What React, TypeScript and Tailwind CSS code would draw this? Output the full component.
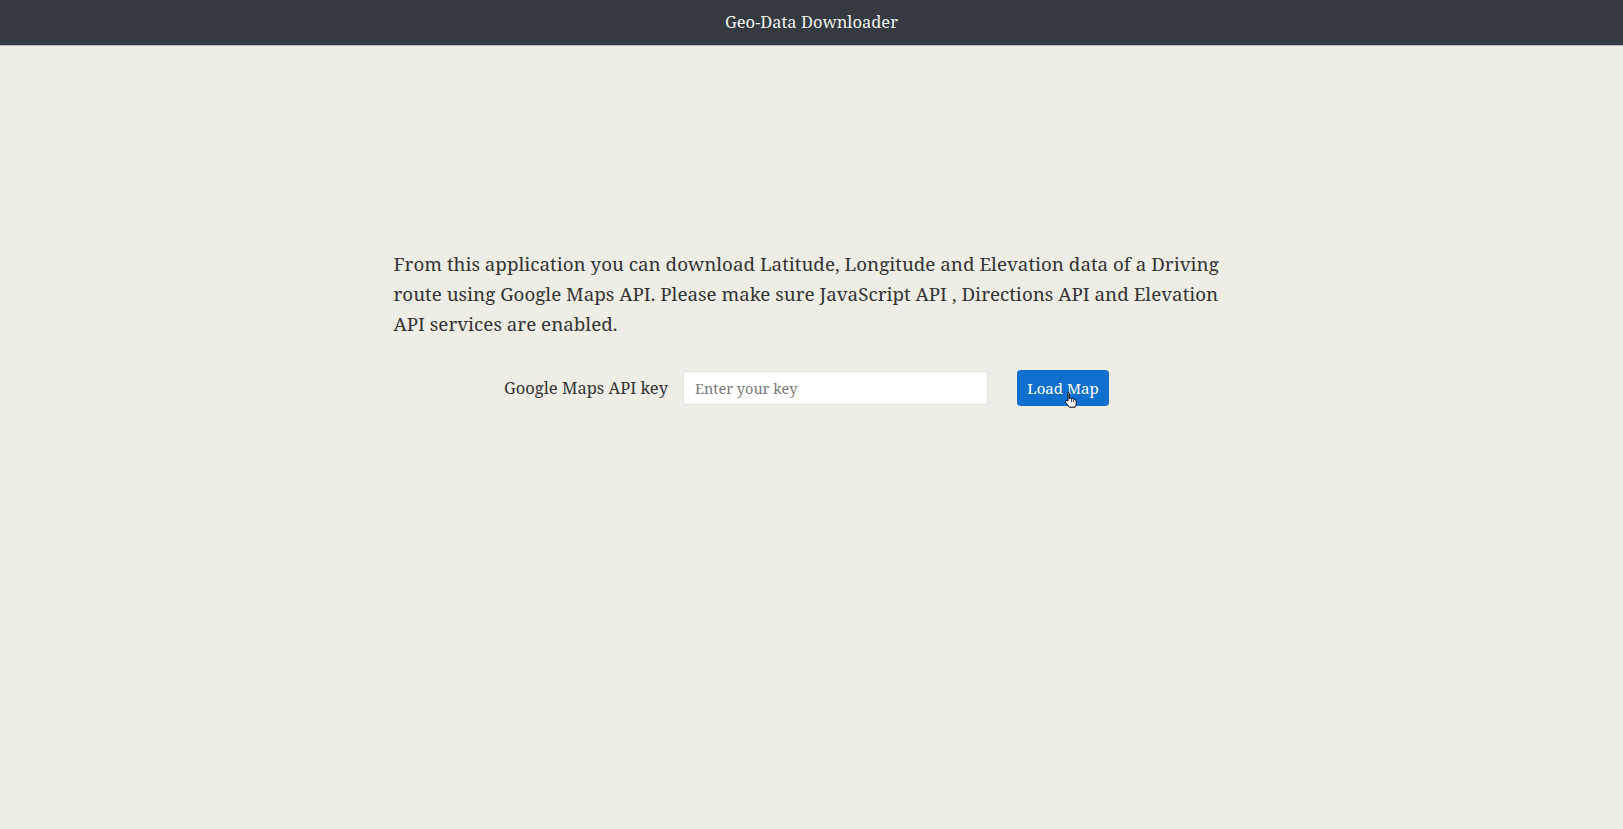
import { useState } from "react";

const serif = "font-['Noto_Serif','DejaVu_Serif',serif]";

function HandCursor() {
  return (
    <svg
      className="pointer-events-none absolute left-[47px] top-[21px]"
      width="15"
      height="17"
      viewBox="0 0 15 17"
    >
      <path
        d="M4 1.2c.8 0 1.3.6 1.3 1.3v5.2l.4-.1c.6-.5 1.6-.3 2 .3.6-.5 1.6-.3 2 .4.7-.4 1.6-.1 1.9.6l.3.8c.5 1.5.5 3.2-.1 4.7l-.8 1.8H5.3L2 11.8c-.5-.6-.5-1.5.1-2 .5-.4 1.2-.4 1.6 0l.3.3V2.5c0-.7 0 -1.3 0-1.3z"
        fill="#fff"
        stroke="#000"
        strokeWidth="1"
        strokeLinejoin="round"
      />
      <path d="M7.6 8.2v3M9.6 8.5v2.7" stroke="#000" strokeWidth="0.8" />
    </svg>
  );
}

export default function App() {
  const [apiKey, setApiKey] = useState("");

  return (
    <div className={`min-h-screen bg-[#eeede6] text-[#2b2b2b] ${serif}`}>
      <header className="flex h-[46px] items-center justify-center border-b border-[#b9bec3] bg-[#343a40]">
        <h1 className="text-[16.5px] text-[#f2f2f2]">Geo-Data Downloader</h1>
      </header>

      <main className="mx-auto w-[836px] pt-[203px]">
        <p className="text-[18.8px] leading-[30px] text-[#333]">
          From this application you can download Latitude, Longitude and Elevation data of a Driving
          route using Google Maps API. Please make sure JavaScript API , Directions API and Elevation
          API services are enabled.
        </p>

        <div className="mt-[31px] flex items-center justify-center pr-[10px]">
          <label htmlFor="api-key" className="text-[16.5px] text-[#333]">
            Google Maps API key
          </label>
          <input
            id="api-key"
            value={apiKey}
            onChange={(e) => setApiKey(e.target.value)}
            placeholder="Enter your key"
            className="ml-[15px] h-[34px] w-[305px] rounded-[3px] border border-[#e2e1dc] bg-white px-[11px] text-[14.5px] text-[#333] placeholder:text-[#7a7a7a] focus:outline-none"
          />
          <div className="relative ml-[29px]">
            <button className="h-[36px] w-[92px] rounded-[4px] bg-[#0e6fcf] text-[15px] text-white">
              Load Map
            </button>
            <HandCursor />
          </div>
        </div>
      </main>
    </div>
  );
}
